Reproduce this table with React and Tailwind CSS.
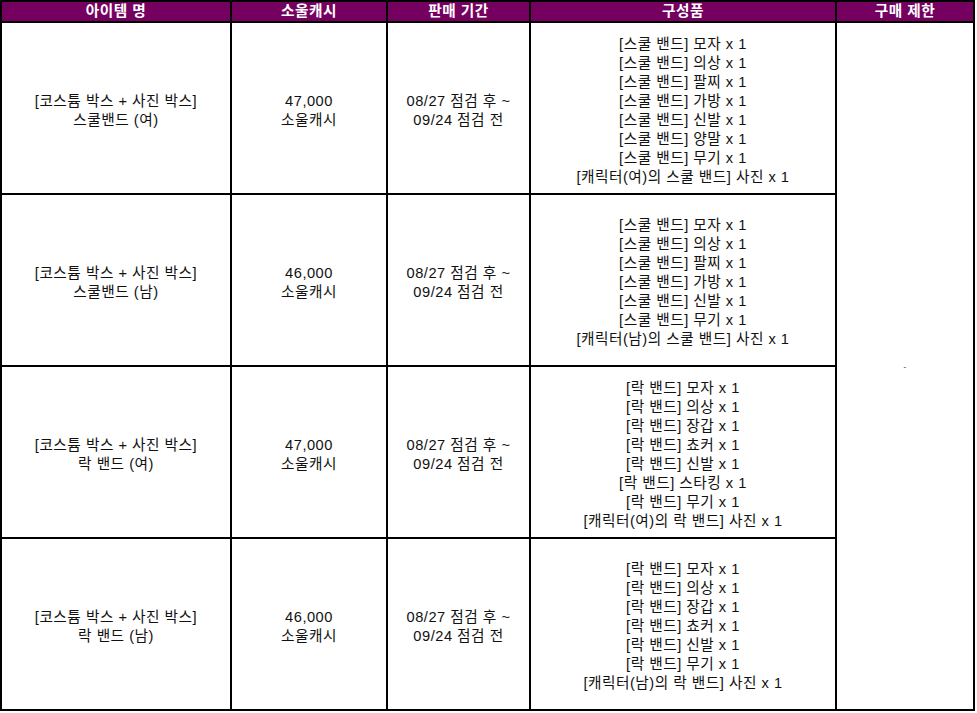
import React from "react";

const rows = [
  {
    name: ["[코스튬 박스 + 사진 박스]", "스쿨밴드 (여)"],
    price: "47,000",
    items: [
      "[스쿨 밴드] 모자 x 1",
      "[스쿨 밴드] 의상 x 1",
      "[스쿨 밴드] 팔찌 x 1",
      "[스쿨 밴드] 가방 x 1",
      "[스쿨 밴드] 신발 x 1",
      "[스쿨 밴드] 양말 x 1",
      "[스쿨 밴드] 무기 x 1",
      "[캐릭터(여)의 스쿨 밴드] 사진 x 1",
    ],
  },
  {
    name: ["[코스튬 박스 + 사진 박스]", "스쿨밴드 (남)"],
    price: "46,000",
    items: [
      "[스쿨 밴드] 모자 x 1",
      "[스쿨 밴드] 의상 x 1",
      "[스쿨 밴드] 팔찌 x 1",
      "[스쿨 밴드] 가방 x 1",
      "[스쿨 밴드] 신발 x 1",
      "[스쿨 밴드] 무기 x 1",
      "[캐릭터(남)의 스쿨 밴드] 사진 x 1",
    ],
  },
  {
    name: ["[코스튬 박스 + 사진 박스]", "락 밴드 (여)"],
    price: "47,000",
    items: [
      "[락 밴드] 모자 x 1",
      "[락 밴드] 의상 x 1",
      "[락 밴드] 장갑 x 1",
      "[락 밴드] 쵸커 x 1",
      "[락 밴드] 신발 x 1",
      "[락 밴드] 스타킹 x 1",
      "[락 밴드] 무기 x 1",
      "[캐릭터(여)의 락 밴드] 사진 x 1",
    ],
  },
  {
    name: ["[코스튬 박스 + 사진 박스]", "락 밴드 (남)"],
    price: "46,000",
    items: [
      "[락 밴드] 모자 x 1",
      "[락 밴드] 의상 x 1",
      "[락 밴드] 장갑 x 1",
      "[락 밴드] 쵸커 x 1",
      "[락 밴드] 신발 x 1",
      "[락 밴드] 무기 x 1",
      "[캐릭터(남)의 락 밴드] 사진 x 1",
    ],
  },
];

const cell =
  "border-r-2 border-b-2 border-black flex flex-col items-center justify-center text-center pt-[5px]";
const head =
  "border-r-2 border-b-2 border-black bg-[#760060] text-white font-bold flex items-center justify-center";

export default function App() {
  return (
    <div
      className="w-[975px] bg-white text-[#111] text-[14.67px] leading-[19px] tracking-[0.5px]"
      style={{ fontFamily: '"Liberation Sans", "Noto Sans CJK KR", sans-serif' }}
    >
      <div className="grid grid-cols-[230px_156px_143px_306px_138px] grid-rows-[21px_repeat(4,172px)] border-l-2 border-t-2 border-black">
        <div className={head}>아이템 명</div>
        <div className={head}>소울캐시</div>
        <div className={head}>판매 기간</div>
        <div className={head}>구성품</div>
        <div className={head}>구매 제한</div>
        {rows.map((r, i) => (
          <React.Fragment key={i}>
            <div className={cell}>
              <div>{r.name[0]}</div>
              <div>{r.name[1]}</div>
            </div>
            <div className={cell}>
              <div>{r.price}</div>
              <div>소울캐시</div>
            </div>
            <div className={cell}>
              <div>08/27 점검 후 ~</div>
              <div>09/24 점검 전</div>
            </div>
            <div className={cell}>
              {r.items.map((t, j) => (
                <div key={j}>{t}</div>
              ))}
            </div>
            {i === 0 && (
              <div className="row-span-4 border-r-2 border-b-2 border-black flex items-center justify-center text-[8px]">
                -
              </div>
            )}
          </React.Fragment>
        ))}
      </div>
    </div>
  );
}
